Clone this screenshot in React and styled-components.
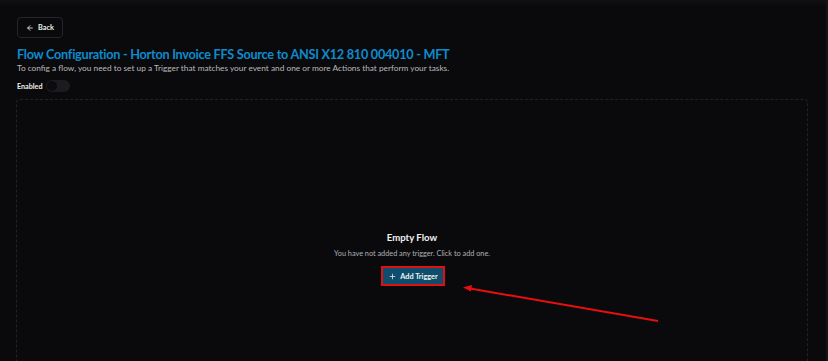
import React from "react";
import styled, { createGlobalStyle } from "styled-components";

const GlobalStyle = createGlobalStyle`
  html, body {
    margin: 0;
    padding: 0;
    background: #0a0a0c;
    overflow: hidden;
  }
  body {
    font-family: Lato, "Noto Sans", sans-serif;
    color: #e6e6e6;
  }
`;

const Page = styled.div`
  position: relative;
  width: 828px;
  height: 361px;
  box-sizing: border-box;
  padding: 17px 18px 0 16px;
  background: linear-gradient(#111114 0px, #0a0a0c 6px);
  border-right: 2px solid #141417;
  overflow: hidden;
`;

const BackButton = styled.button`
  display: flex;
  align-items: center;
  gap: 4px;
  height: 21px;
  padding: 0 8px 0 8px;
  margin-left: 1px;
  background: transparent;
  border: 1px solid #25252a;
  border-radius: 4px;
  color: #f0f0f0;
  font-family: inherit;
  font-size: 7.3px;
  font-weight: 700;
  cursor: pointer;
`;

const Title = styled.h1`
  margin: 7px 0 0 1px;
  font-size: 12.7px;
  letter-spacing: -0.27px;
  line-height: 18px;
  font-weight: 700;
  color: #0d8ccf;
`;

const Subtitle = styled.p`
  margin: -1px 0 0 1px;
  font-size: 8.3px;
  line-height: 12px;
  color: #b8b8bc;
`;

const EnabledRow = styled.div`
  display: flex;
  align-items: center;
  gap: 3px;
  margin: 6px 0 0 1px;
  font-size: 7.2px;
  font-weight: 700;
  color: #f0f0f0;
`;

const Toggle = styled.div`
  width: 24px;
  height: 12px;
  border-radius: 6px;
  background: #1c1c20;
  position: relative;

  &::after {
    content: "";
    position: absolute;
    left: 1px;
    top: 1px;
    width: 10px;
    height: 10px;
    border-radius: 50%;
    background: #0c0c0e;
  }
`;

const Canvas = styled.div`
  margin-top: 7px;
  height: 300px;
  border: 1px dashed #222226;
  border-radius: 4px;
  display: flex;
  flex-direction: column;
  align-items: center;
  padding-top: 131px;
  box-sizing: border-box;
`;

const EmptyTitle = styled.div`
  font-size: 9.6px;
  font-weight: 700;
  color: #f2f2f2;
  line-height: 14px;
`;

const EmptyText = styled.div`
  margin-top: 3px;
  font-size: 7.3px;
  color: #b0b0b4;
  line-height: 11px;
`;

const Highlight = styled.div`
  margin-top: 7px;
  margin-left: 2px;
  border: 2px solid #e01010;
`;

const AddButton = styled.button`
  display: flex;
  align-items: center;
  gap: 4px;
  height: 16px;
  padding: 0 5px 0 6px;
  border: 0;
  background: #0e4e6c;
  color: #f2f2f2;
  font-family: inherit;
  font-size: 7.3px;
  font-weight: 700;
  cursor: pointer;
`;

const Arrow = styled.svg`
  position: absolute;
  left: 0;
  top: 0;
  pointer-events: none;
`;

const App = () => {
  return (
    <>
      <GlobalStyle />
      <Page>
        <BackButton>
          <svg width="8" height="8" viewBox="0 0 24 24" fill="none" stroke="#f0f0f0" strokeWidth="2.5" strokeLinecap="round" strokeLinejoin="round">
            <path d="M19 12H5" />
            <path d="M12 19l-7-7 7-7" />
          </svg>
          Back
        </BackButton>
        <Title>Flow Configuration - Horton Invoice FFS Source to ANSI X12 810 004010 - MFT</Title>
        <Subtitle>
          To config a flow, you need to set up a Trigger that matches your event and one or more Actions that perform your tasks.
        </Subtitle>
        <EnabledRow>
          Enabled
          <Toggle />
        </EnabledRow>
        <Canvas>
          <EmptyTitle>Empty Flow</EmptyTitle>
          <EmptyText>You have not added any trigger. Click to add one.</EmptyText>
          <Highlight>
            <AddButton>
              <svg width="7" height="7" viewBox="0 0 24 24" fill="none" stroke="#f2f2f2" strokeWidth="2.5" strokeLinecap="round">
                <path d="M12 4v16" />
                <path d="M4 12h16" />
              </svg>
              Add Trigger
            </AddButton>
          </Highlight>
        </Canvas>
        <Arrow width="828" height="361" viewBox="0 0 828 361">
          <line x1="658" y1="321" x2="470" y2="288.5" stroke="#e80f0f" strokeWidth="2" />
          <polygon points="463,287.5 472,285 471,291.5" fill="#e80f0f" />
        </Arrow>
      </Page>
    </>
  );
};

export default App;
